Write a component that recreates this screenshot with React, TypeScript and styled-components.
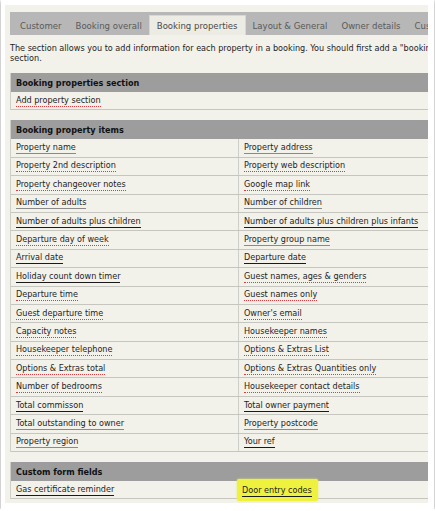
import React from 'react';
import styled, { createGlobalStyle, css } from 'styled-components';

type Line = 'gray' | 'black' | 'red';

interface Field {
  label: string,
  line: Line,
  highlight?: boolean
}

const tabs = ['Customer', 'Booking overall', 'Booking properties', 'Layout & General', 'Owner details', 'Custom'];

const leftItems: Field[] = [
  { label: 'Property name', line: 'gray' },
  { label: 'Property 2nd description', line: 'red' },
  { label: 'Property changeover notes', line: 'red' },
  { label: 'Number of adults', line: 'gray' },
  { label: 'Number of adults plus children', line: 'black' },
  { label: 'Departure day of week', line: 'red' },
  { label: 'Arrival date', line: 'black' },
  { label: 'Holiday count down timer', line: 'black' },
  { label: 'Departure time', line: 'red' },
  { label: 'Guest departure time', line: 'red' },
  { label: 'Capacity notes', line: 'red' },
  { label: 'Housekeeper telephone', line: 'red' },
  { label: 'Options & Extras total', line: 'red' },
  { label: 'Number of bedrooms', line: 'red' },
  { label: 'Total commisson', line: 'black' },
  { label: 'Total outstanding to owner', line: 'gray' },
  { label: 'Property region', line: 'gray' }
];

const rightItems: Field[] = [
  { label: 'Property address', line: 'gray' },
  { label: 'Property web description', line: 'red' },
  { label: 'Google map link', line: 'red' },
  { label: 'Number of children', line: 'gray' },
  { label: 'Number of adults plus children plus infants', line: 'black' },
  { label: 'Property group name', line: 'gray' },
  { label: 'Departure date', line: 'black' },
  { label: 'Guest names, ages & genders', line: 'red' },
  { label: 'Guest names only', line: 'red' },
  { label: "Owner's email", line: 'red' },
  { label: 'Housekeeper names', line: 'red' },
  { label: 'Options & Extras List', line: 'red' },
  { label: 'Options & Extras Quantities only', line: 'red' },
  { label: 'Housekeeper contact details', line: 'red' },
  { label: 'Total owner payment', line: 'black' },
  { label: 'Property postcode', line: 'gray' },
  { label: 'Your ref', line: 'black' }
];

const customItems: Field[] = [
  { label: 'Gas certificate reminder', line: 'black' },
  { label: 'Door entry codes', line: 'black', highlight: true }
];

const FieldLink: React.FC<{ field: Field }> = ({ field }) => {
  const link = <Link $line={field.line}>{field.label}</Link>;
  return field.highlight ? <Highlight>{link}</Highlight> : link;
};

const App: React.FC = () => (
  <>
    <GlobalStyle />
    <Card>
      <Viewport>
        <Content>
          <TabBar>
            {tabs.map((t) => (
              <Tab key={t} $active={t === 'Booking properties'}>{t}</Tab>
            ))}
          </TabBar>

          <Intro>
            The section allows you to add information for each property in a booking. You should first add a "booking_property" section.
          </Intro>

          <Section>
            <Header>Booking properties section</Header>
            <Row>
              <Cell><FieldLink field={{ label: 'Add property section', line: 'red' }} /></Cell>
            </Row>
          </Section>

          <Section>
            <Header>Booking property items</Header>
            {leftItems.map((item, i) => (
              <Row key={item.label} $split>
                <Cell><FieldLink field={item} /></Cell>
                <Cell $divider><FieldLink field={rightItems[i]} /></Cell>
              </Row>
            ))}
          </Section>

          <Section>
            <Header>Custom form fields</Header>
            <Row $split>
              <Cell><FieldLink field={customItems[0]} /></Cell>
              <Cell $tight><FieldLink field={customItems[1]} /></Cell>
            </Row>
          </Section>
        </Content>
      </Viewport>
    </Card>
  </>
);

const GlobalStyle = createGlobalStyle`
  body {
    margin: 0;
    background: #ffffff;
    font-family: "DejaVu Sans Condensed", "DejaVu Sans", sans-serif;
    font-stretch: condensed;
    font-size: 9px;
    color: #1e1e1e;
  }
`;

const Card = styled.div`
  margin: 0 0 0 1px;
  width: 433px;
  height: 509px;
  box-sizing: border-box;
  padding: 5px 6px 6px 4px;
  background: #ffffff;
  box-shadow: 0 1px 3px rgba(0, 0, 0, 0.45);
`;

const Viewport = styled.div`
  width: 100%;
  height: 100%;
  overflow: hidden;
  background: #f2f1ea;
`;

const Content = styled.div`
  width: 500px;
  padding: 7px 0 0 5px;
`;

const TabBar = styled.div`
  display: flex;
  align-items: flex-end;
  height: 23px;
  padding-left: 3px;
  background: #b7b7b7;
`;

const Tab = styled.div<{ $active?: boolean }>`
  display: flex;
  align-items: center;
  height: 20px;
  padding: 0 7px;
  font-size: 9.5px;
  color: #5a5a5a;
  white-space: nowrap;
  box-sizing: border-box;

  ${(p) => p.$active && css`
    background: #ecebe4;
    border: 1px solid #d8d8d2;
    border-bottom: none;
    color: #4a4a4a;
  `}
`;

const Intro = styled.p`
  margin: 8px 0 0;
  width: 470px;
  line-height: 10px;
`;

const Section = styled.div`
  width: 456px;
  margin-top: 10px;
  border-left: 1px solid #cfcfca;
`;

const Header = styled.div`
  display: flex;
  align-items: center;
  height: 19px;
  padding-left: 5px;
  background: #9d9d9d;
  font-weight: bold;
  color: #111111;
`;

const Row = styled.div<{ $split?: boolean }>`
  display: grid;
  grid-template-columns: ${(p) => (p.$split ? '227px 1fr' : '1fr')};
  height: 18.4px;
  box-sizing: border-box;
  border-bottom: 1px solid #c6c6c1;
`;

const Cell = styled.div<{ $divider?: boolean, $tight?: boolean }>`
  display: flex;
  align-items: center;
  padding-left: ${(p) => (p.$tight ? '4px' : '5px')};
  border-left: ${(p) => (p.$divider ? '1px solid #cfcfca' : 'none')};
  white-space: nowrap;
`;

const lineColors: Record<Line, string> = {
  gray: '1px solid #8a8a8a',
  black: '1px solid #1a1a1a',
  red: '1px dotted #e0393e'
};

const Link = styled.span<{ $line: Line }>`
  line-height: 10px;
  padding-bottom: 1px;
  border-bottom: ${(p) => lineColors[p.$line]};
`;

const Highlight = styled.span`
  display: inline-block;
  margin: -6px -6px -6px -5px;
  padding: 6px 6px 6px 5px;
  background: #eef23e;
  border-radius: 2px;
  box-shadow: 0 0 2px #eef23e;
`;

export default App;
